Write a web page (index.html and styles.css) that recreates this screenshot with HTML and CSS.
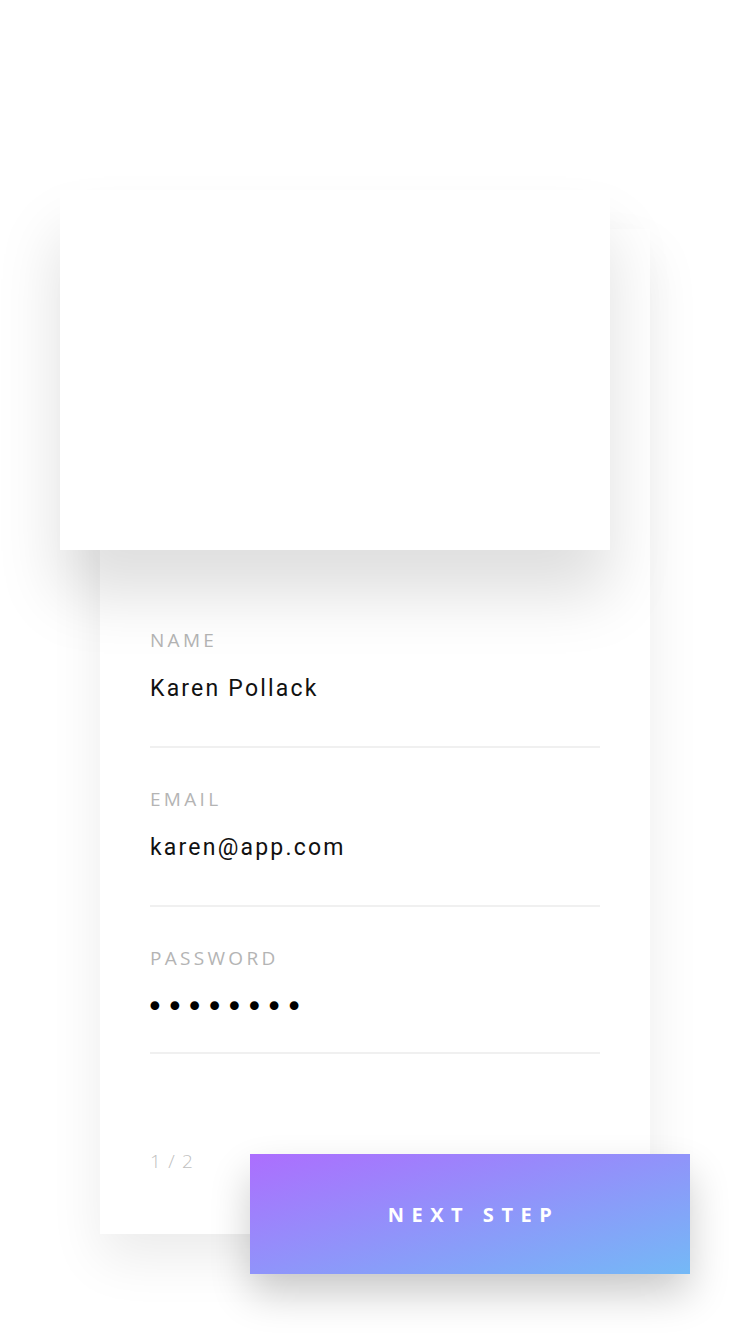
FILE: index.html
```html
<!DOCTYPE html>
<html>
<head>
<meta charset="utf-8">
<link rel="stylesheet" href="styles.css">
</head>
<body>
<div class="stage">
  <div class="back-card">
    <div class="field">
      <div class="label">NAME</div>
      <div class="value">Karen Pollack</div>
    </div>
    <div class="field">
      <div class="label">EMAIL</div>
      <div class="value">karen@app.com</div>
    </div>
    <div class="field field-pass">
      <div class="label">PASSWORD</div>
      <div class="value dots">••••••••</div>
    </div>
    <div class="footer">
      <div class="step">1 / 2</div>
      <button class="next">NEXT STEP</button>
    </div>
  </div>
  <div class="front-card"></div>
</div>
</body>
</html>
```
FILE: styles.css
```css
html, body {
  margin: 0;
  padding: 0;
  background: #ffffff;
}
.stage {
  position: relative;
  width: 750px;
  height: 1334px;
  overflow: hidden;
  padding-top: 229px;
  box-sizing: border-box;
}
.back-card {
  margin-left: 100px;
  width: 550px;
  box-sizing: border-box;
  padding: 401px 50px 0 50px;
  background: #ffffff;
  box-shadow: 0 25px 50px rgba(0, 0, 0, 0.08);
}
.front-card {
  position: absolute;
  left: 60px;
  top: 190px;
  width: 550px;
  height: 360px;
  background: #ffffff;
  box-shadow: 0 45px 60px rgba(0, 0, 0, 0.13);
}
.field {
  padding-top: 41px;
  padding-bottom: 44px;
  border-bottom: 2px solid #f0f0f0;
}
.field:first-child {
  padding-top: 0;
}
.field-pass {
  padding-bottom: 32px;
}
.label {
  font-family: "Open Sans", sans-serif;
  font-size: 19px;
  line-height: 20px;
  letter-spacing: 3.3px;
  color: #b4b4b4;
}
.value {
  margin-top: 26px;
  font-family: "Roboto", "Liberation Sans", sans-serif;
  font-size: 23px;
  line-height: 26px;
  letter-spacing: 2.2px;
  color: #111111;
}
.dots {
  margin-left: -4px;
  font-family: "DejaVu Sans", sans-serif;
  font-size: 30px;
  letter-spacing: 2.2px;
  color: #000;
}
.footer {
  display: flex;
  align-items: flex-start;
  padding-top: 100px;
}
.step {
  margin-top: -3px;
  font-family: "Open Sans", sans-serif;
  font-size: 19px;
  line-height: 20px;
  letter-spacing: 1.2px;
  color: #c0c0c0;
  font-weight: 300;
}
.next {
  margin-left: auto;
  margin-right: -90px;
  margin-bottom: -40px;
  width: 440px;
  height: 120px;
  border: 0;
  padding: 0 0 0 7px;
  background: linear-gradient(to bottom right, #ac6efe, #74b9f6);
  box-shadow: 0 20px 40px rgba(0, 0, 0, 0.2);
  color: #ffffff;
  font-family: "Open Sans", sans-serif;
  font-weight: 700;
  font-size: 20px;
  letter-spacing: 7.5px;
}
```
